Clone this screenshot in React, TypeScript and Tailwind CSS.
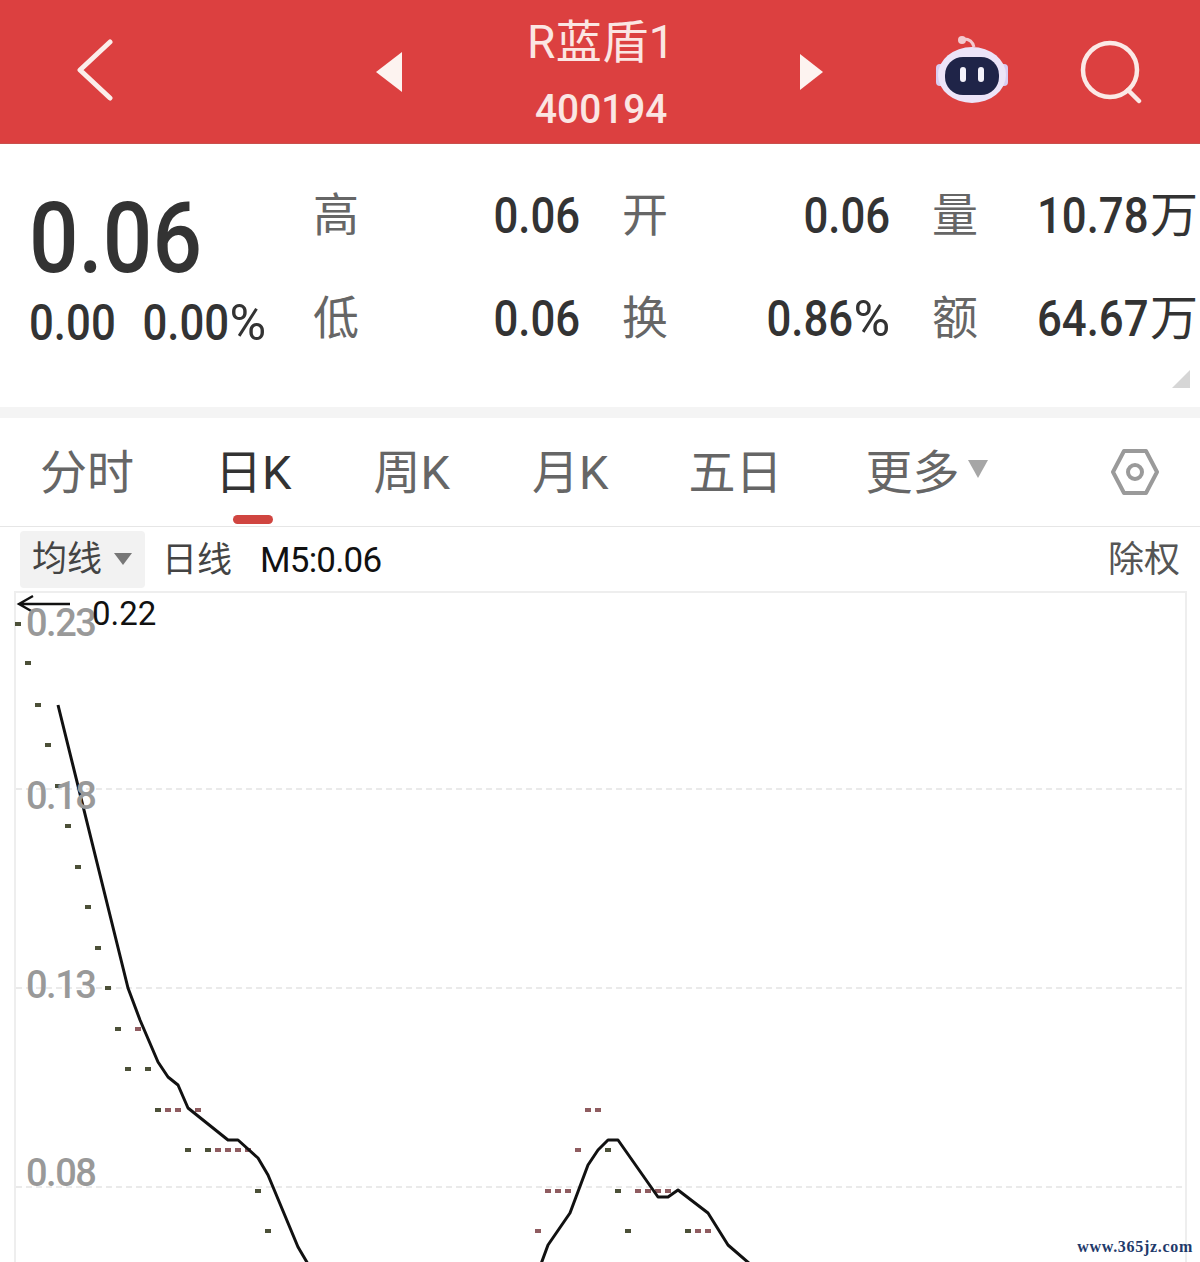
import React from "react";

const G = "#4c5038";
const R = "#8f5c60";

const dashes: [number, number, string][] = [
  [18, 624, G], [28, 663, G], [38, 705, G], [48, 745, G], [58, 786, G], [68, 826, G], [78, 867, G], [88, 907, G], [98, 948, G], [108, 988, G],
  [118, 1029, G], [138, 1029, R], [128, 1069, G], [148, 1069, G],
  [158, 1110, G], [168, 1110, R], [178, 1110, R], [198, 1110, R],
  [188, 1150, G], [208, 1150, G], [218, 1150, R], [228, 1150, R], [238, 1150, R], [248, 1150, R],
  [258, 1191, G], [268, 1231, G],
  [588, 1110, R], [598, 1110, R], [578, 1150, R], [608, 1150, G],
  [548, 1191, R], [558, 1191, R], [568, 1191, R], [618, 1191, G], [638, 1191, R], [648, 1191, R], [658, 1191, R], [668, 1191, R],
  [538, 1231, R], [628, 1231, G], [688, 1231, G], [698, 1231, R], [708, 1231, R],
];

const line1 = "58,705 128,988 140,1020 158,1062 168,1077 178,1085 188,1108 228,1140 238,1140 258,1158 268,1175 298,1247 308,1264";
const line2 = "541,1264 548,1245 570,1213 588,1165 598,1150 608,1140 618,1140 658,1197 668,1197 678,1190 708,1213 728,1245 750,1264";

function Stat({ label, value, suffix }: { label: string; value: string; suffix?: string }) {
  return (
    <div className="flex h-[60px] items-center justify-between">
      <span className="text-[46px] leading-none text-[#666666]">{label}</span>
      <span className="mt-[2px] flex items-center text-[50px] font-medium leading-none text-[#333333]">
        <span className="inline-block origin-right scale-x-[0.875]">{value}</span>
        {suffix === "%" && <span className="inline-block font-normal">%</span>}
        {suffix === "万" && <span className="mr-[-2px] ml-[1px] inline-block text-[48px] font-normal">万</span>}
      </span>
    </div>
  );
}

function Tab({ label, className }: { label: string; className: string }) {
  return <span className={`text-[47px] leading-none text-[#666666] ${className}`}>{label}</span>;
}

export default function App() {
  return (
    <div className="relative flex h-[1262px] w-[1200px] flex-col overflow-hidden bg-white font-['Roboto','Noto_Sans_CJK_SC',sans-serif]">
      {/* Header */}
      <header className="flex h-[144px] shrink-0 items-center border-b border-[#c9504c] bg-[#dc4040]">
        <svg width="36" height="62" viewBox="0 0 36 62" className="ml-[77px] mt-[-4px]" fill="none">
          <path d="M33 3 L3 31 L33 59" stroke="#fbeeea" strokeWidth="5" strokeLinecap="round" strokeLinejoin="round" />
        </svg>
        <svg width="28" height="42" viewBox="0 0 28 42" className="ml-[262px]">
          <path d="M27 1 L1 21 L27 41 Z" fill="#fdf3f0" />
        </svg>
        <div className="flex w-[396px] flex-col items-center text-[#fbe6e3]">
          <span className="mt-[4px] text-[46px] leading-[50px] tracking-[0.5px]">R蓝盾1</span>
          <span className="mt-[23px] inline-block scale-x-[0.97] text-[40px] font-medium leading-[40px]">400194</span>
        </div>
        <svg width="26" height="38" viewBox="0 0 26 38">
          <path d="M1 1 L24 19 L1 37 Z" fill="#fdf3f0" />
        </svg>
        <svg width="76" height="72" viewBox="0 0 76 72" className="ml-[109px] mt-[-8px]">
          <circle cx="28" cy="8" r="4" fill="#f3c9cf" />
          <path d="M30 7 Q38 7 40 15" stroke="#f3c9cf" strokeWidth="3" fill="none" />
          <rect x="2" y="32" width="8" height="22" rx="4" fill="#d9cdf2" />
          <rect x="66" y="32" width="8" height="22" rx="4" fill="#d9cdf2" />
          <ellipse cx="38" cy="43" rx="34" ry="28" fill="#ece4f8" />
          <rect x="11" y="25" width="54" height="38" rx="18" fill="#1f2448" />
          <rect x="26" y="35" width="6" height="15" rx="3" fill="#f4f2fb" />
          <rect x="44" y="35" width="6" height="15" rx="3" fill="#f4f2fb" />
        </svg>
        <svg width="64" height="64" viewBox="0 0 64 64" className="ml-[70px]" fill="none">
          <circle cx="30" cy="30" r="27" stroke="#fbe9e6" strokeWidth="4.5" />
          <path d="M48 50 L59 61" stroke="#fbe9e6" strokeWidth="4.5" strokeLinecap="round" />
        </svg>
      </header>

      {/* Quote */}
      <section className="relative flex h-[263px] shrink-0 pt-[41px]">
        <div className="w-[313px] shrink-0 pl-[29px]">
          <div className="flex h-[108px] items-center text-[98px] font-medium leading-none text-[#333333]">
            <span className="inline-block origin-left scale-x-[0.89]">0.06</span>
          </div>
          <div className="flex h-[60px] items-center text-[50px] font-medium leading-none text-[#333333]">
            <span className="inline-block w-[85px] whitespace-nowrap">
              <span className="inline-block origin-left scale-x-[0.875]">0.00</span>
            </span>
            <span className="ml-[28px] flex w-[124px] items-center justify-end">
              <span className="inline-block origin-right scale-x-[0.875]">0.00</span>
              <span className="inline-block font-normal">%</span>
            </span>
          </div>
        </div>
        <div className="grid h-fit grid-cols-[267px_268px_264px] gap-x-[42px] gap-y-[43px]">
          <Stat label="高" value="0.06" />
          <Stat label="开" value="0.06" />
          <Stat label="量" value="10.78" suffix="万" />
          <Stat label="低" value="0.06" />
          <Stat label="换" value="0.86" suffix="%" />
          <Stat label="额" value="64.67" suffix="万" />
        </div>
        <svg width="18" height="18" viewBox="0 0 18 18" className="absolute bottom-[19px] right-[10px]">
          <path d="M18 0 V18 H0 Z" fill="#d6d6d6" />
        </svg>
      </section>

      <div className="h-[11px] shrink-0 bg-[#f4f4f4]" />

      {/* Tabs */}
      <nav className="flex h-[109px] shrink-0 items-center border-b border-[#e6e6e6] pl-[40px]">
        <Tab label="分时" className="" />
        <span className="relative ml-[81px] text-[47px] leading-none text-[#333333]">
          日K
          <span className="absolute bottom-[-28px] left-[18px] h-[9px] w-[40px] rounded-full bg-[#d04540]" />
        </span>
        <Tab label="周K" className="ml-[82px]" />
        <Tab label="月K" className="ml-[82px]" />
        <Tab label="五日" className="ml-[80px]" />
        <Tab label="更多" className="ml-[83px]" />
        <svg width="22" height="20" viewBox="0 0 22 20" className="ml-[7px] mt-[-6px]">
          <path d="M1 1 H21 L11 19 Z" fill="#a6a6a6" />
        </svg>
        <svg width="48" height="48" viewBox="0 0 48 48" className="ml-[122px]" fill="none">
          <path d="M13 3 H35 L46 24 L35 45 H13 L2 24 Z" stroke="#9a9a9a" strokeWidth="4" strokeLinejoin="round" />
          <circle cx="24" cy="24" r="7" stroke="#9a9a9a" strokeWidth="4" />
        </svg>
      </nav>

      {/* Toolbar */}
      <div className="flex h-[64px] shrink-0 items-center pl-[20px] pr-[20px]">
        <div className="flex h-[57px] w-[125px] items-center rounded-[4px] bg-[#f2f2f2] pl-[12px]">
          <span className="text-[35px] leading-none text-[#444444]">均线</span>
          <svg width="20" height="14" viewBox="0 0 20 14" className="ml-[11px]">
            <path d="M1 1 H19 L10 13 Z" fill="#777777" />
          </svg>
        </div>
        <span className="ml-[17px] mt-[3px] text-[35px] leading-none text-[#444444]">日线</span>
        <span className="ml-[28px] mt-[3px] text-[35px] leading-none tracking-[-0.8px] text-[#111111]">M5:0.06</span>
        <span className="ml-auto mt-[2px] text-[36px] leading-none text-[#555555]">除权</span>
      </div>

      {/* Chart */}
      <div className="relative ml-[14px] w-[1173px] flex-1 border-x-2 border-t-2 border-[#eeeeee]">
        <svg className="absolute left-[-2px] top-[-2px]" width="1173" height="671" viewBox="14 591 1173 671" fill="none">
          {[789, 988, 1187].map((y) => (
            <line key={y} x1="16" x2="1185" y1={y} y2={y} stroke="#e4e4e4" strokeWidth="1.5" strokeDasharray="6 4" />
          ))}
          {dashes.map(([x, y, c], i) => (
            <rect key={i} x={x - 3} y={y - 2} width="6" height="4" fill={c} />
          ))}
          <polyline points={line1} stroke="#111111" strokeWidth="3" strokeLinejoin="round" />
          <polyline points={line2} stroke="#111111" strokeWidth="3" strokeLinejoin="round" />
          <path d="M70 604 H20 M33 596 L19 604 L33 612" stroke="#111111" strokeWidth="2.4" />
        </svg>
        <span className="absolute left-[10px] top-[11px] text-[38px] font-medium leading-none tracking-[-1.5px] text-[#999999]">0.23</span>
        <span className="absolute left-[76px] top-[4px] text-[33px] leading-none text-[#111111]">0.22</span>
        <span className="absolute left-[10px] top-[184px] text-[38px] font-medium leading-none tracking-[-1.5px] text-[#999999]">0.18</span>
        <span className="absolute left-[10px] top-[373px] text-[38px] font-medium leading-none tracking-[-1.5px] text-[#999999]">0.13</span>
        <span className="absolute left-[10px] top-[561px] text-[38px] font-medium leading-none tracking-[-1.5px] text-[#999999]">0.08</span>
      </div>

      {/* Watermark */}
      <span className="absolute bottom-[7px] right-[7px] font-['Liberation_Serif',serif] text-[16px] font-bold leading-none tracking-[0.7px] text-[#1f3a6b]">
        www.365jz.com
      </span>
    </div>
  );
}
